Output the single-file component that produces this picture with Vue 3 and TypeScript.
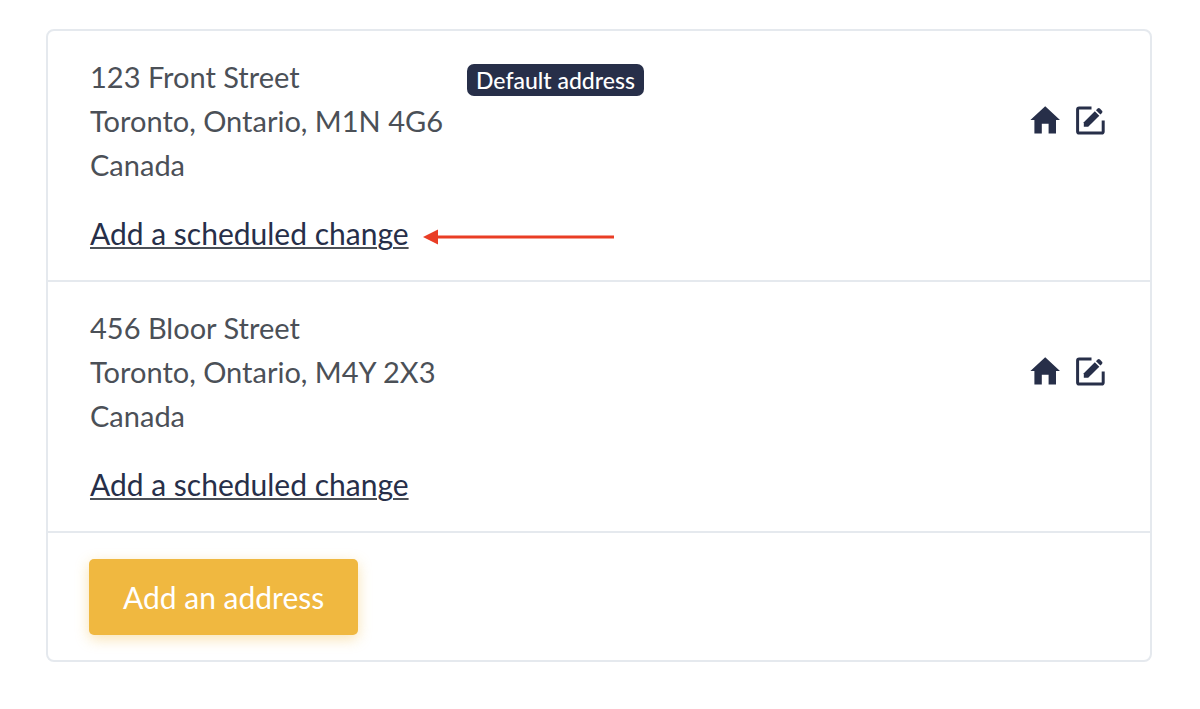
<script setup lang="ts">
interface Address {
  id: number
  street: string
  city: string
  country: string
  isDefault: boolean
}

const addresses: Address[] = [
  { id: 1, street: '123 Front Street', city: 'Toronto, Ontario, M1N 4G6', country: 'Canada', isDefault: true },
  { id: 2, street: '456 Bloor Street', city: 'Toronto, Ontario, M4Y 2X3', country: 'Canada', isDefault: false },
]
</script>

<template>
  <main class="page">
    <section class="card" aria-label="Addresses">
      <article v-for="address in addresses" :key="address.id" class="row">
        <div class="top">
          <address class="lines">
            <div>{{ address.street }}</div>
            <div>{{ address.city }}</div>
            <div>{{ address.country }}</div>
          </address>
          <span v-if="address.isDefault" class="badge">Default address</span>
          <div class="actions">
            <button type="button" class="icon" aria-label="Set as home address">
              <svg viewBox="0 0 30 30" width="30" height="30" aria-hidden="true">
                <path d="M15.2 0.3 30 13.9H26V27.4H18.6V17.8H11.8V27.4H4.4V13.9H0.4Z" fill="currentColor" />
              </svg>
            </button>
            <button type="button" class="icon" aria-label="Edit address">
              <svg viewBox="0 0 30 30" width="30" height="30" aria-hidden="true">
                <path d="M16.5 2H4.2Q2.6 2 2.6 3.6V25.4Q2.6 27 4.2 27H26.6Q28.2 27 28.2 25.4V14.5" fill="none" stroke="currentColor" stroke-width="3" />
                <path d="M8.8 16.3 19.8 5.2 24.3 9.7 13.2 20.8H8.8Z" fill="currentColor" />
                <path d="M21 4.2 22.6 2.6Q23.8 1.6 24.9 2.6L27 4.7Q28 5.8 27 6.9L25.4 8.5Z" fill="currentColor" />
              </svg>
            </button>
          </div>
        </div>
        <div class="schedule">
          <a href="#" class="link">Add a scheduled change</a>
          <svg v-if="address.isDefault" class="arrow" viewBox="0 0 192 16" width="192" height="16" aria-hidden="true">
            <path d="M14 8H191" stroke="#e93d25" stroke-width="3" />
            <path d="M0 8 15 0.5V15.5Z" fill="#e93d25" />
          </svg>
        </div>
      </article>
      <footer class="footer">
        <button type="button" class="add">Add an address</button>
      </footer>
    </section>
  </main>
</template>

<style>
body {
  margin: 0;
  background: #fff;
}
</style>

<style scoped>
.page {
  padding: 29px 48px 48px 46px;
  font-family: Lato, "Noto Sans", sans-serif;
  font-size: 29px;
  line-height: 44px;
  color: #4b5057;
}
.card {
  border: 2px solid #e5e9ee;
  border-radius: 8px;
}
.row {
  padding: 24px 45px 25px 42px;
  border-bottom: 2px solid #e5e9ee;
}
.top {
  display: flex;
  align-items: flex-start;
}
.lines {
  font-style: normal;
}
.badge {
  margin: 9px 0 0 24px;
  padding: 0 9px;
  border-radius: 7px;
  background: #272f49;
  color: #fff;
  font-size: 23px;
  font-weight: 500;
  line-height: 32px;
}
.actions {
  display: flex;
  gap: 15px;
  margin-left: auto;
  align-self: center;
}
.icon {
  display: block;
  padding: 0;
  border: 0;
  background: none;
  color: #272f49;
  cursor: pointer;
}
.icon svg {
  display: block;
}
.schedule {
  display: flex;
  align-items: center;
  gap: 14px;
  margin-top: 24px;
  font-size: 30px;
}
.link {
  color: #272f49;
  text-decoration: underline;
  text-decoration-color: #4b5057;
  text-decoration-thickness: 2px;
  text-underline-offset: 2px;
}
.arrow {
  margin-top: 8px;
}
.footer {
  padding: 26px 41px 25px;
}
.add {
  display: block;
  padding: 16px 34px;
  border: 0;
  border-radius: 5px;
  background: #f0b840;
  box-shadow: 0 4px 14px rgba(240, 184, 64, 0.4);
  color: #fff;
  font: inherit;
  font-size: 30px;
  cursor: pointer;
}
</style>
